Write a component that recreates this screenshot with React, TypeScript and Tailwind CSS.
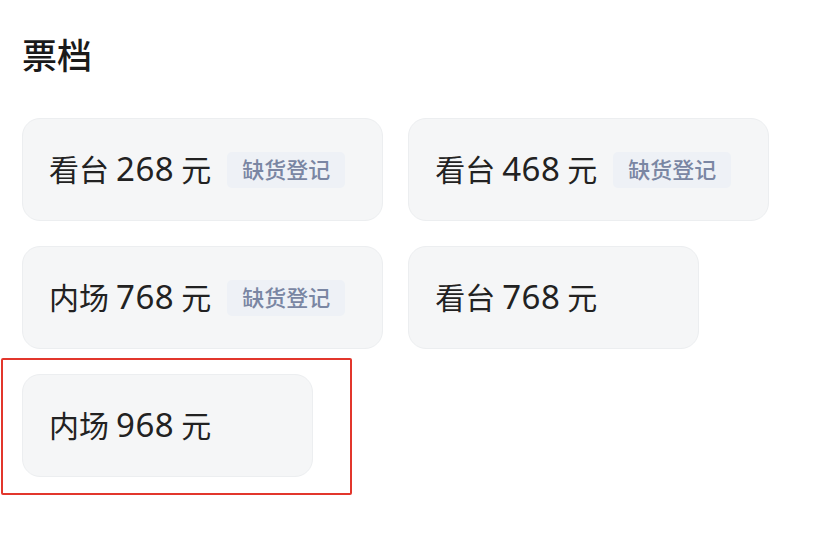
import React from 'react';

interface Tier {
    label: string;
    price: number;
    soldOut: boolean;
}

const tiers: Tier[] = [
    { label: '看台', price: 268, soldOut: true },
    { label: '看台', price: 468, soldOut: true },
    { label: '内场', price: 768, soldOut: true },
    { label: '看台', price: 768, soldOut: false },
    { label: '内场', price: 968, soldOut: false },
];

const TierCard: React.FC<{ tier: Tier }> = ({ tier }) => (
    <div className="h-[103px] min-w-[291px] pl-[26px] pr-[37px] flex items-center bg-[#f5f6f7] border border-[#eceef0] rounded-[18px]">
        <span className="flex items-baseline text-[30px] leading-[40px] text-[#222]">
            {tier.label}
            <span className="mx-[7px] text-[33px] tracking-[0.5px]">{tier.price}</span>
            元
        </span>
        {tier.soldOut && (
            <span className="ml-[16px] h-[36px] px-[15px] flex items-center rounded-[5px] bg-[#eef1f6] text-[22px] font-medium text-[#7a86a3]">
                缺货登记
            </span>
        )}
    </div>
);

export default function App() {
    return (
        <div className="w-[814px] h-[541px] bg-white overflow-hidden pl-[22px] pt-[34px]" style={{ fontFamily: '"Noto Sans", "Noto Sans CJK SC", sans-serif' }}>
            <h2 className="text-[35px] font-medium leading-[44px] text-[#1a1a1a]">票档</h2>
            <div className="mt-[40px] flex flex-wrap gap-[25px] w-[780px]">
                {tiers.map((t, i) =>
                    i === tiers.length - 1 ? (
                        <div key={i} className="relative">
                            <TierCard tier={t} />
                            <div className="absolute -left-[21px] -top-[16px] -right-[39px] -bottom-[18px] border-2 border-[#e2362c] rounded-[2px] pointer-events-none" />
                        </div>
                    ) : (
                        <TierCard key={i} tier={t} />
                    )
                )}
            </div>
        </div>
    );
}
